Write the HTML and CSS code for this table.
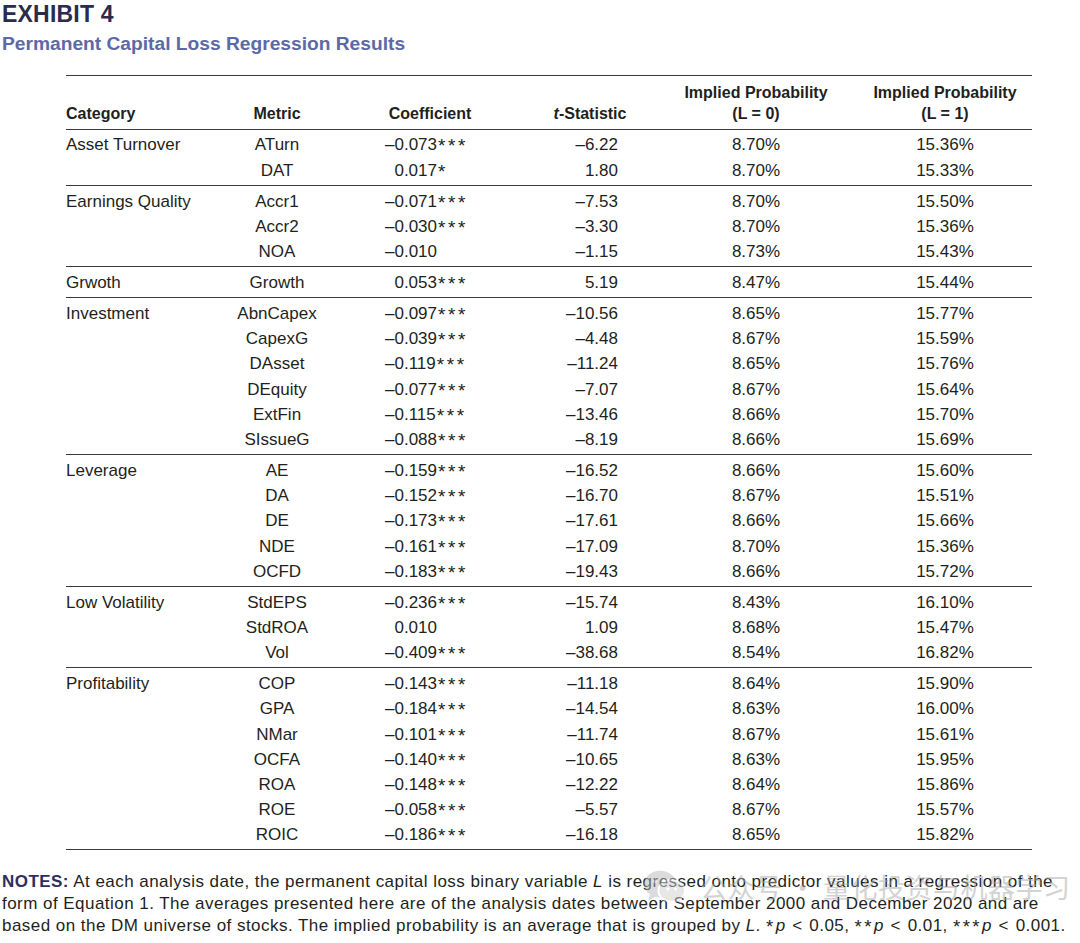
FILE: index.html
```html
<!DOCTYPE html>
<html lang="en">
<head>
<meta charset="utf-8">
<title>Exhibit 4 – Permanent Capital Loss Regression Results</title>
<link rel="stylesheet" href="styles.css">
</head>
<body>
<div class="page">
  <header class="exhibit">
    <h1 class="ex-num">EXHIBIT 4</h1>
    <h2 class="ex-title">Permanent Capital Loss Regression Results</h2>
  </header>

  <table class="results">
    <colgroup>
      <col class="w-cat"><col class="w-met"><col class="w-coef"><col class="w-t"><col class="w-p0"><col class="w-p1">
    </colgroup>
    <thead>
      <tr>
        <th class="h-cat">Category</th>
        <th>Metric</th>
        <th>Coefficient</th>
        <th class="h-t"><i>t</i>-Statistic</th>
        <th>Implied Probability<br>(L = 0)</th>
        <th>Implied Probability<br>(L = 1)</th>
      </tr>
    </thead>
    <tbody>
      <tr class="first"><td class="cat">Asset Turnover</td><td class="met">ATurn</td><td class="coef">–0.073<span class="sig">***</span></td><td class="t">–6.22</td><td class="p">8.70%</td><td class="p">15.36%</td></tr>
      <tr class="last"><td class="cat"></td><td class="met">DAT</td><td class="coef pos">0.017<span class="sig">*</span></td><td class="t">1.80</td><td class="p">8.70%</td><td class="p">15.33%</td></tr>

      <tr class="first"><td class="cat">Earnings Quality</td><td class="met">Accr1</td><td class="coef">–0.071<span class="sig">***</span></td><td class="t">–7.53</td><td class="p">8.70%</td><td class="p">15.50%</td></tr>
      <tr><td class="cat"></td><td class="met">Accr2</td><td class="coef">–0.030<span class="sig">***</span></td><td class="t">–3.30</td><td class="p">8.70%</td><td class="p">15.36%</td></tr>
      <tr class="last"><td class="cat"></td><td class="met">NOA</td><td class="coef">–0.010</td><td class="t">–1.15</td><td class="p">8.73%</td><td class="p">15.43%</td></tr>

      <tr class="first last"><td class="cat">Grwoth</td><td class="met">Growth</td><td class="coef pos">0.053<span class="sig">***</span></td><td class="t">5.19</td><td class="p">8.47%</td><td class="p">15.44%</td></tr>

      <tr class="first"><td class="cat">Investment</td><td class="met">AbnCapex</td><td class="coef">–0.097<span class="sig">***</span></td><td class="t">–10.56</td><td class="p">8.65%</td><td class="p">15.77%</td></tr>
      <tr><td class="cat"></td><td class="met">CapexG</td><td class="coef">–0.039<span class="sig">***</span></td><td class="t">–4.48</td><td class="p">8.67%</td><td class="p">15.59%</td></tr>
      <tr><td class="cat"></td><td class="met">DAsset</td><td class="coef">–0.119<span class="sig">***</span></td><td class="t">–11.24</td><td class="p">8.65%</td><td class="p">15.76%</td></tr>
      <tr><td class="cat"></td><td class="met">DEquity</td><td class="coef">–0.077<span class="sig">***</span></td><td class="t">–7.07</td><td class="p">8.67%</td><td class="p">15.64%</td></tr>
      <tr><td class="cat"></td><td class="met">ExtFin</td><td class="coef">–0.115<span class="sig">***</span></td><td class="t">–13.46</td><td class="p">8.66%</td><td class="p">15.70%</td></tr>
      <tr class="last"><td class="cat"></td><td class="met">SIssueG</td><td class="coef">–0.088<span class="sig">***</span></td><td class="t">–8.19</td><td class="p">8.66%</td><td class="p">15.69%</td></tr>

      <tr class="first"><td class="cat">Leverage</td><td class="met">AE</td><td class="coef">–0.159<span class="sig">***</span></td><td class="t">–16.52</td><td class="p">8.66%</td><td class="p">15.60%</td></tr>
      <tr><td class="cat"></td><td class="met">DA</td><td class="coef">–0.152<span class="sig">***</span></td><td class="t">–16.70</td><td class="p">8.67%</td><td class="p">15.51%</td></tr>
      <tr><td class="cat"></td><td class="met">DE</td><td class="coef">–0.173<span class="sig">***</span></td><td class="t">–17.61</td><td class="p">8.66%</td><td class="p">15.66%</td></tr>
      <tr><td class="cat"></td><td class="met">NDE</td><td class="coef">–0.161<span class="sig">***</span></td><td class="t">–17.09</td><td class="p">8.70%</td><td class="p">15.36%</td></tr>
      <tr class="last"><td class="cat"></td><td class="met">OCFD</td><td class="coef">–0.183<span class="sig">***</span></td><td class="t">–19.43</td><td class="p">8.66%</td><td class="p">15.72%</td></tr>

      <tr class="first"><td class="cat">Low Volatility</td><td class="met">StdEPS</td><td class="coef">–0.236<span class="sig">***</span></td><td class="t">–15.74</td><td class="p">8.43%</td><td class="p">16.10%</td></tr>
      <tr><td class="cat"></td><td class="met">StdROA</td><td class="coef pos">0.010</td><td class="t">1.09</td><td class="p">8.68%</td><td class="p">15.47%</td></tr>
      <tr class="last"><td class="cat"></td><td class="met">Vol</td><td class="coef">–0.409<span class="sig">***</span></td><td class="t">–38.68</td><td class="p">8.54%</td><td class="p">16.82%</td></tr>

      <tr class="first"><td class="cat">Profitability</td><td class="met">COP</td><td class="coef">–0.143<span class="sig">***</span></td><td class="t">–11.18</td><td class="p">8.64%</td><td class="p">15.90%</td></tr>
      <tr><td class="cat"></td><td class="met">GPA</td><td class="coef">–0.184<span class="sig">***</span></td><td class="t">–14.54</td><td class="p">8.63%</td><td class="p">16.00%</td></tr>
      <tr><td class="cat"></td><td class="met">NMar</td><td class="coef">–0.101<span class="sig">***</span></td><td class="t">–11.74</td><td class="p">8.67%</td><td class="p">15.61%</td></tr>
      <tr><td class="cat"></td><td class="met">OCFA</td><td class="coef">–0.140<span class="sig">***</span></td><td class="t">–10.65</td><td class="p">8.63%</td><td class="p">15.95%</td></tr>
      <tr><td class="cat"></td><td class="met">ROA</td><td class="coef">–0.148<span class="sig">***</span></td><td class="t">–12.22</td><td class="p">8.64%</td><td class="p">15.86%</td></tr>
      <tr><td class="cat"></td><td class="met">ROE</td><td class="coef">–0.058<span class="sig">***</span></td><td class="t">–5.57</td><td class="p">8.67%</td><td class="p">15.57%</td></tr>
      <tr class="last end"><td class="cat"></td><td class="met">ROIC</td><td class="coef">–0.186<span class="sig">***</span></td><td class="t">–16.18</td><td class="p">8.65%</td><td class="p">15.82%</td></tr>
    </tbody>
  </table>

  <p class="notes"><b class="notes-label">NOTES:</b> At each analysis date, the permanent capital loss binary variable <i>L</i> is regressed onto predictor values in a regression of the<br>form of Equation 1. The averages presented here are of the analysis dates between September 2000 and December 2020 and are<br>based on the DM universe of stocks. The implied probability is an average that is grouped by <i>L</i>. <span class="nsig">*</span><i>p</i> <span class="lt">&lt;</span> 0.05, <span class="nsig">**</span><i>p</i> <span class="lt">&lt;</span> 0.01, <span class="nsig">***</span><i>p</i> <span class="lt">&lt;</span> 0.001.</p>

  <div class="watermark" aria-hidden="true">
    <svg class="wm-logo" viewBox="0 0 48 40" width="46" height="38">
      <ellipse cx="19" cy="17" rx="17" ry="14" fill="#b9b9b9"/>
      <path d="M8 28 L6 35 L14 30 Z" fill="#b9b9b9"/>
      <ellipse cx="31" cy="24" rx="14" ry="11.5" fill="#d0d0d0" stroke="#fff" stroke-width="2"/>
      <path d="M39 33 L42 38 L34 34 Z" fill="#d0d0d0"/>
      <circle cx="13" cy="14" r="2" fill="#fff"/>
      <circle cx="23" cy="14" r="2" fill="#fff"/>
      <circle cx="27" cy="22" r="1.6" fill="#fff"/>
      <circle cx="35" cy="22" r="1.6" fill="#fff"/>
    </svg>
    <span class="wm-text">公众号 · 量化投资与机器学习</span>
  </div>
</div>
</body>
</html>
```

FILE: styles.css
```css
html, body {
  margin: 0;
  padding: 0;
  background: #ffffff;
}

body {
  font-family: "Liberation Sans", Arial, sans-serif;
  color: #231f20;
}

.page {
  position: relative;
  width: 1080px;
  height: 943px;
  overflow: hidden;
}

.exhibit {
  padding: 0 0 0 2px;
  height: 75px;
}

.ex-num {
  margin: 0;
  padding-top: 1px;
  font-size: 23px;
  line-height: 26px;
  font-weight: 700;
  letter-spacing: 0.2px;
  color: #2c2b4d;
}

.ex-title {
  margin: 6px 0 0;
  font-size: 19.2px;
  line-height: 22px;
  font-weight: 700;
  color: #5c69a6;
}

/* table */
.results {
  margin-left: 66px;
  width: 966px;
  border-collapse: separate;
  border-spacing: 0;
  table-layout: fixed;
}

.w-cat { width: 154px; }
.w-met { width: 114px; }
.w-coef { width: 192px; }
.w-t { width: 128px; }
.w-p0 { width: 204px; }
.w-p1 { width: 174px; }

.results th {
  font-size: 16px;
  line-height: 21px;
  font-weight: 700;
  text-align: center;
  vertical-align: bottom;
  padding: 5.5px 0 5px;
  border-top: 1.5px solid #3a3a3a;
  white-space: nowrap;
}

.results th.h-cat {
  text-align: left;
}

.results td {
  font-size: 17px;
  line-height: 25.2px;
  padding: 0;
  white-space: nowrap;
}

.results tr.first td {
  border-top: 1.5px solid #3a3a3a;
  padding-top: 2.9px;
}

.results tr.last td {
  padding-bottom: 1.9px;
}

.results tr.end td {
  border-bottom: 1.5px solid #3a3a3a;
}

.cat {
  text-align: left;
}

.met {
  text-align: center;
}

.coef {
  text-align: left;
  padding-left: 51px !important;
}

.coef.pos {
  padding-left: calc(51px + 0.556em) !important;
}

.sig {
  font-size: 1.12em;
  line-height: 0;
  letter-spacing: 2.6px;
  margin-left: 1px;
  vertical-align: -2px;
}

.t {
  text-align: right;
  padding-right: 36px !important;
}

.p {
  text-align: center;
}

/* notes */
.notes {
  margin: 21px 0 0 2px;
  font-size: 17px;
  line-height: 22px;
  letter-spacing: 0.46px;
  color: #231f20;
  white-space: nowrap;
}

.notes-label {
  font-weight: 700;
  color: #2e2d5e;
}

.nsig {
  font-size: 1.1em;
  letter-spacing: 2.4px;
  vertical-align: -2px;
  line-height: 0;
}

.lt {
  margin: 0 1.5px;
}

/* watermark overlay */
.watermark {
  position: absolute;
  left: 642px;
  top: 868px;
  display: flex;
  align-items: center;
  gap: 12px;
  opacity: 0.5;
  pointer-events: none;
}

.wm-text {
  font-family: "Noto Sans CJK SC", sans-serif;
  font-size: 27px;
  line-height: 36px;
  color: #a9a9a9;
  letter-spacing: 0.5px;
}
```
